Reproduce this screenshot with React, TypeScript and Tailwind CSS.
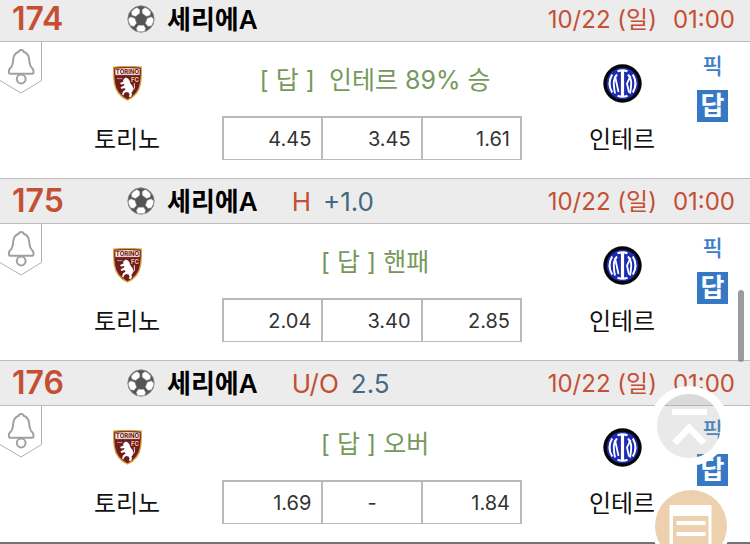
const matches = [
  {
    id: 174,
    league: "세리에A",
    type: "",
    line: "",
    date: "10/22 (일)",
    time: "01:00",
    pick: "[ 답 ]\u00a0 인테르 89% 승",
    odds: ["4.45", "3.45", "1.61"],
  },
  {
    id: 175,
    league: "세리에A",
    type: "H",
    line: "+1.0",
    date: "10/22 (일)",
    time: "01:00",
    pick: "[ 답 ] 핸패",
    odds: ["2.04", "3.40", "2.85"],
  },
  {
    id: 176,
    league: "세리에A",
    type: "U/O",
    line: "2.5",
    date: "10/22 (일)",
    time: "01:00",
    pick: "[ 답 ] 오버",
    odds: ["1.69", "-", "1.84"],
  },
];

type Match = (typeof matches)[number];

function BallIcon() {
  return (
    <svg viewBox="0 0 28 28" className="size-7 shrink-0" aria-hidden="true">
      <circle cx="14" cy="14" r="13.2" fill="#555" stroke="#8d8d8d" strokeWidth=".8" />
      <g fill="#fff" stroke="#8a8a8a" strokeWidth=".5">
        <path d="M12.800 4.500V8.200L8.600 11.400L4.800 10.200L4.300 7Q6.500 3.800 9.800 2.500Z" />
        <path d="M15.200 4.500V8.200L19.400 11.400L23.200 10.200L23.700 7Q21.500 3.800 18.200 2.500Z" />
        <path d="M7.800 13.200L9.600 18.200L7 21.400L3.500 20.800Q1.200 17.500 1.200 14L3.800 11.800Z" />
        <path d="M20.200 13.200L18.400 18.200L21 21.400L24.500 20.800Q26.800 17.500 26.800 14L24.200 11.800Z" />
        <path d="M11.200 20.300H16.800L18.600 23.200L17.800 26.200Q14 27.300 10.200 26.200L9.400 23.200Z" />
      </g>
    </svg>
  );
}

function BellTab() {
  return (
    <button type="button" aria-label="알림" className="block self-start">
      <svg viewBox="0 0 42 54" className="h-[54px] w-[42px]" fill="none">
        <path d="M41.500 0V38.500L21 51L0 38.500" stroke="#b0b0b0" />
        <g stroke="#a0a0a0" strokeWidth="2">
          <path
            d="M18.800 9.700Q19 8 21.200 8T23.600 9.700C27.500 11 29 14 29.200 17.500C29.400 22 30 24.500 32.500 26.500Q33.500 27.500 33.500 29.500V30.500Q33.500 31.800 32.200 31.800H10.200Q8.900 31.800 8.900 30.500V29.500Q8.900 27.500 9.900 26.500C12.400 24.500 13 22 13.200 17.500C13.400 14 14.900 11 18.800 9.700Z"
            strokeLinejoin="round"
          />
          <circle cx="21.200" cy="37" r="4.400" />
        </g>
      </svg>
    </button>
  );
}

function TorinoLogo() {
  return (
    <svg viewBox="0 0 29 35" className="h-[35px] w-[29px]" aria-hidden="true">
      <path
        d="M.8 1.200Q14.500-.2 28.200 1.200C28.500 14 28 21 23.500 27Q20 31.500 14.500 34Q9 31.500 5.500 27C1 21 .5 14 .8 1.200Z"
        fill="#701c1e"
        stroke="#d6a13c"
        strokeWidth="1.300"
      />
      <path d="M2 2.300Q14.500 1 27 2.300V9.300H2z" fill="#fff5ea" stroke="#701c1e" strokeWidth=".8" />
      <text
        x="14.500"
        y="8"
        textAnchor="middle"
        fontSize="6"
        fontWeight="800"
        fontFamily="Inter, sans-serif"
        fill="#742524"
      >
        TORINO
      </text>
      <text x="18" y="15.800" fontSize="6" fontWeight="700" fontFamily="Inter, sans-serif" fill="#f0d39a">
        FC
      </text>
      <path d="M4 12.500H9.500" stroke="#b98580" strokeWidth="1.200" />
      <path
        d="M12.500 11.500L15 12.500L16.500 14.500L17.500 17.500L19.500 20L20.500 23L19.500 25.500L18.500 26.500L19 29L17.500 31L15.800 30.800L16.600 28.500L15.500 26.500L13 26L11 27.500L10.500 29.500L9 28.500L10 25.500L12.500 23.500L11.500 22L8.500 23L7.500 21.500L11 19.500L11.500 18L8 18.500L7 17L10.500 15.500L10 14Z"
        fill="#fff"
      />
      <path d="M19 24Q22.500 23 21.500 20T22 17" fill="none" stroke="#e9d5d3" strokeWidth="1" />
    </svg>
  );
}

function InterLogo() {
  return (
    <svg viewBox="0 0 39 39" className="size-[39px]" aria-hidden="true">
      <circle cx="19.500" cy="19.500" r="19.200" fill="#050509" />
      <circle cx="19.500" cy="19.500" r="15.800" fill="#1c2bb0" />
      <g fill="none" stroke="#fff">
        <path d="M14.500 7.200Q19.500 5.400 24.500 7.200M14.500 31.800Q19.500 33.600 24.500 31.800" strokeWidth="2.200" />
        <path d="M19.500 6.500V32.500" strokeWidth="3.200" />
        <path d="M9.200 10.500Q3.800 19.500 9.200 28.500M29.800 10.500Q35.200 19.500 29.800 28.500" strokeWidth="2" />
        <path d="M14 10.500Q10.500 14.500 10.800 20T12 29.500" strokeWidth="1.900" />
        <path d="M25 10.500Q28.500 14.500 28.200 20T27 29.500" strokeWidth="1.900" />
        <path d="M12 12L15.500 28M27.500 12L24 19.500L26 28.500" strokeWidth="1.800" />
      </g>
    </svg>
  );
}

function Team({ name, logo }: { name: string; logo: React.ReactNode }) {
  return (
    <div className="flex flex-col items-center gap-[21px] pt-[22px]">
      <div className="flex h-[39px] items-center">{logo}</div>
      <span className="text-2xl leading-8 text-[#111]">{name}</span>
    </div>
  );
}

function MatchRow({ match }: { match: Match }) {
  return (
    <section>
      <header className="flex h-[46px] items-center justify-between border-y border-[#bdbdbd] bg-[#ececec] pr-[15px] pl-3">
        <div className="flex items-center">
          <span className="w-[115px] text-[32px] leading-none font-semibold text-[#c44f33]">
            {match.id}
          </span>
          <BallIcon />
          <h2 className="ml-3 text-[26px] font-semibold text-black">
            {match.league}
          </h2>
          {match.type && (
            <p className="ml-[34px] flex gap-3 text-[26px] text-[#c44f33]">
              {match.type}
              <span className="text-[#456a80]">{match.line}</span>
            </p>
          )}
        </div>
        <p className="flex gap-4 pt-[2px] text-2xl text-[#c44f33]">
          <span>{match.date}</span>
          <span>{match.time}</span>
        </p>
      </header>
      <div className="grid h-[136px] grid-cols-[42px_34fr_64fr_33fr_53px]">
        <BellTab />
        <Team name="토리노" logo={<TorinoLogo />} />
        <div className="px-[10px] pt-5">
          <p className="pl-1.5 text-center text-[25px] leading-9 whitespace-nowrap text-[#76995b]">
            {match.pick}
          </p>
          <table className="mt-[18px] h-11 w-full table-fixed border-2 border-b border-[#bababa]">
            <tbody>
              <tr>
                {match.odds.map((odd, i) => (
                  <td
                    key={i}
                    className={
                      odd === "-"
                        ? "border-x-2 border-[#bababa] text-center text-xl text-[#333]"
                        : "border-x-2 border-[#bababa] pr-[10px] text-right text-xl text-[#333]"
                    }
                  >
                    {odd}
                  </td>
                ))}
              </tr>
            </tbody>
          </table>
        </div>
        <div className="pl-[15px]">
          <Team name="인테르" logo={<InterLogo />} />
        </div>
        <div className="flex flex-col items-start pt-2">
          <button
            type="button"
            className="w-[31px] text-center text-[22px] leading-8 font-medium text-[#3a7fc6]"
          >
            픽
          </button>
          <button
            type="button"
            className="mt-2 flex h-8 w-[31px] items-center justify-center bg-[#3579c6] text-[26px] leading-8 font-bold text-white"
          >
            답
          </button>
        </div>
      </div>
    </section>
  );
}

export default function App() {
  return (
    <div className="relative overflow-hidden bg-white font-['Inter','Noto_Sans_CJK_KR',sans-serif]">
      <main className="-mt-1 border-b-2 border-[#737373]">
        {matches.map((match) => (
          <MatchRow key={match.id} match={match} />
        ))}
      </main>

      {/* Scroll thumb */}
      <div className="absolute top-[290px] right-[6px] h-[72px] w-[6px] rounded-full bg-[#828282]/80" />

      {/* Floating buttons */}
      <button
        type="button"
        aria-label="맨 위로"
        className="fixed right-[21px] bottom-[78px] size-20 rounded-full"
      >
        <svg viewBox="0 0 80 80" className="size-20" fill="none">
          <circle cx="40" cy="40" r="32.500" fill="#9a9a9a" fillOpacity=".22" />
          <circle cx="40" cy="40" r="36" stroke="#fff" strokeWidth="8" />
          <path d="M23 26H58" stroke="#fff" strokeWidth="6" />
          <path d="M25.500 57L40.300 42L55 57" stroke="#fff" strokeWidth="6.500" />
        </svg>
      </button>
      <button
        type="button"
        aria-label="목록"
        className="fixed right-[19px] -bottom-[22px] size-20 rounded-full"
      >
        <svg viewBox="0 0 80 80" className="size-20" fill="none">
          <circle cx="40" cy="40" r="40" fill="#fff" />
          <circle cx="40" cy="40" r="36" fill="#edd1ae" />
          <path d="M18.500 19H60.500V68H18.500z" fill="#fff" />
          <path d="M22 30H57.500V64H22z" fill="#edd1ae" />
          <path d="M25.500 37H54.500M25.500 48H54.500" stroke="#fff" strokeWidth="4" />
        </svg>
      </button>
    </div>
  );
}
